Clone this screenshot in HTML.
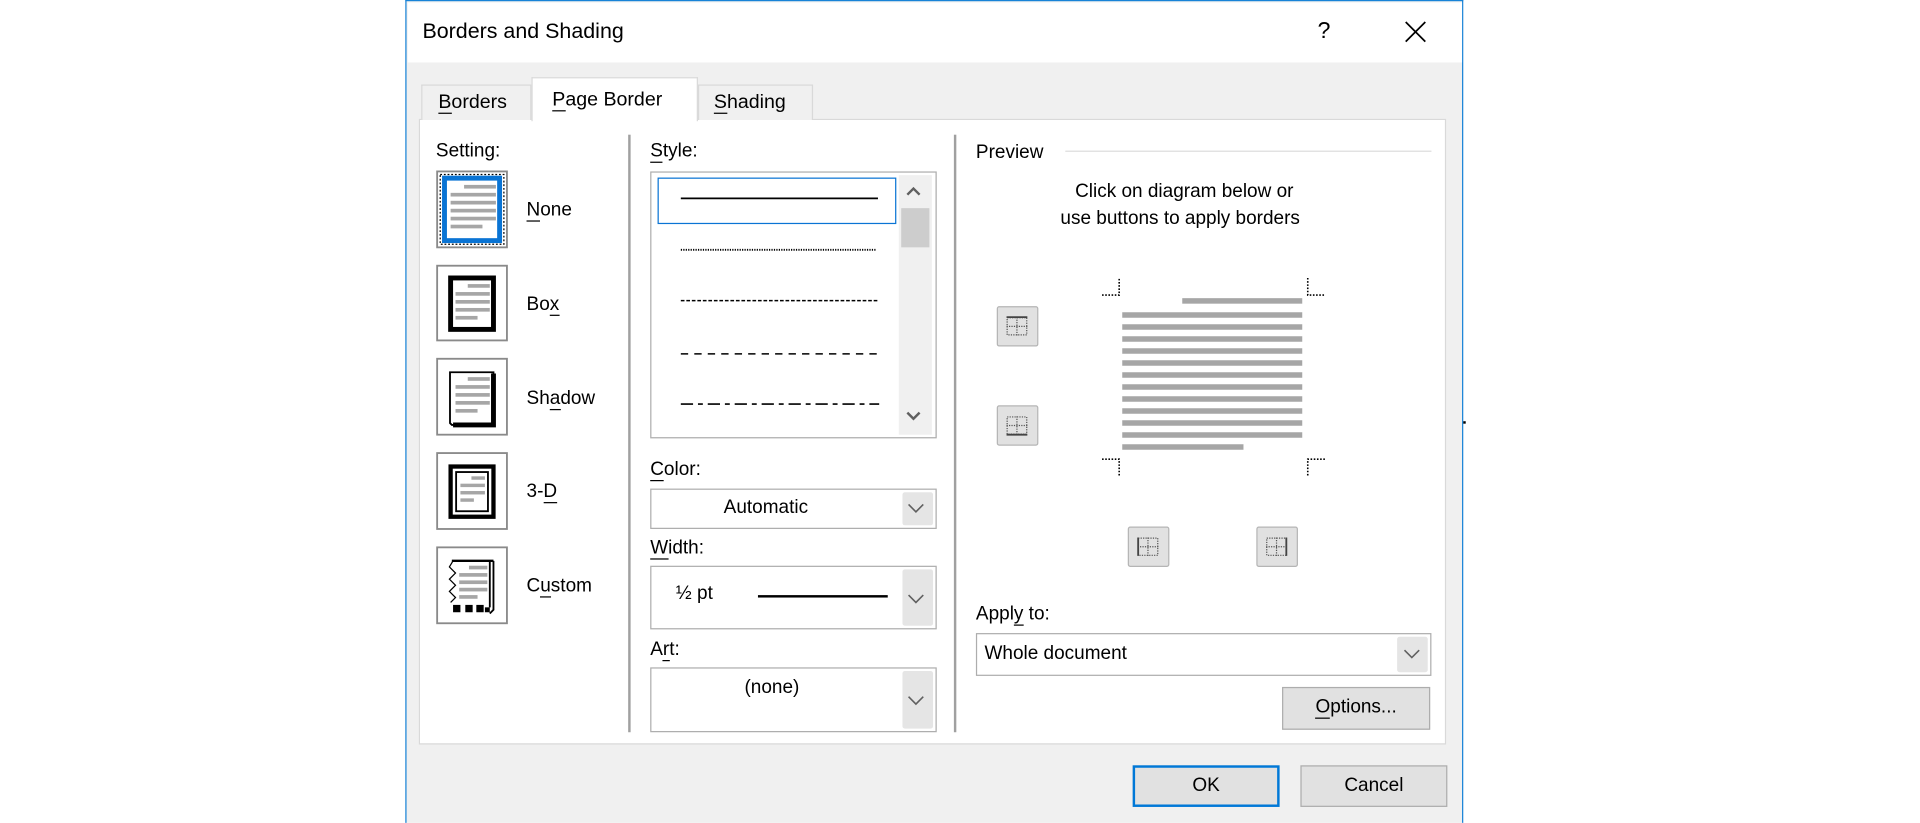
<!DOCTYPE html>
<html><head><meta charset="utf-8">
<style>
html,body{margin:0;padding:0;background:#fff;overflow:hidden;width:1920px;height:823px}
#w{position:absolute;left:0;top:0;width:1568px;height:672px;transform:scale(1.22449);transform-origin:0 0;font-family:"Liberation Sans",sans-serif;color:#000;font-size:15.5px}
.a{position:absolute}
.t{position:absolute;white-space:nowrap;line-height:1}
u{text-decoration:none;border-bottom:1.3px solid #000}
.combo{position:absolute;background:#fff;border:1.5px solid #adadad;box-sizing:border-box}
.dd{position:absolute;right:2px;top:2px;bottom:2px;width:25px;background:#e5e5e5;border-radius:2px}
.btn{position:absolute;background:#e1e1e1;border:1.5px solid #adadad;box-sizing:border-box;text-align:center}
.sb{position:absolute;background:#e1e1e1;border:1.5px solid #b5b5b5;box-sizing:border-box;border-radius:2px}
</style></head><body>
<div id="w">
<div class="a" style="left:331px;top:0;width:864px;height:672px;background:#f0f0f0;border:1.5px solid #1883d7;border-bottom:none;box-sizing:border-box"></div>
<div class="a" style="left:332.5px;top:1.5px;width:861px;height:49px;background:#fff"></div>
<div class="t" style="left:345px;top:17px;font-size:17.5px">Borders and Shading</div>
<div class="t" style="left:1076px;top:16px;font-size:19px">?</div>
<svg class="a" style="left:1147px;top:17px" width="18" height="18"><path d="M1 1L17 17M17 1L1 17" stroke="#000" stroke-width="1.4"/></svg>
<div class="a" style="left:1195px;top:344px;width:2px;height:2px;background:#000"></div>

<div class="a" style="left:342px;top:97px;width:839px;height:511px;background:#fff;border:1px solid #d9d9d9;box-sizing:border-box"></div>
<div class="a" style="left:344px;top:69px;width:90px;height:29px;background:#f0f0f0;border:1px solid #d9d9d9;border-bottom:none;box-sizing:border-box"></div>
<div class="a" style="left:570px;top:69px;width:94px;height:29px;background:#f0f0f0;border:1px solid #d9d9d9;border-bottom:none;box-sizing:border-box"></div>
<div class="a" style="left:434px;top:63px;width:136px;height:36px;background:#fff;border:1px solid #d9d9d9;border-bottom:none;box-sizing:border-box"></div>
<div class="t" style="left:358px;top:76px;font-size:16px"><u>B</u>orders</div>
<div class="t" style="left:451px;top:74px;font-size:16px"><u>P</u>age Border</div>
<div class="t" style="left:583px;top:76px;font-size:16px"><u>S</u>hading</div>

<div class="a" style="left:513px;top:110px;width:1.5px;height:488px;background:#a0a0a0"></div>
<div class="a" style="left:779px;top:110px;width:1.5px;height:488px;background:#a0a0a0"></div>

<div class="t" style="left:356px;top:116px">Setting:</div>
<svg class="a" style="left:356px;top:139px" width="59" height="64" viewBox="0 0 59 64">
<rect x="1" y="1" width="57" height="62" fill="#fff" stroke="#8a8a8a" stroke-width="1.5"/>
<rect x="3.5" y="3.5" width="52" height="57" fill="none" stroke="#000" stroke-width="1" stroke-dasharray="1.5 1.5"/>
<rect x="7" y="6.5" width="45" height="51" fill="#fff" stroke="#0a74d4" stroke-width="4"/>
<g fill="#a6a6a6"><rect x="23" y="12" width="26" height="3"/><rect x="12" y="18.5" width="37" height="3"/><rect x="12" y="25" width="37" height="3"/><rect x="12" y="31.5" width="37" height="3"/><rect x="12" y="38" width="37" height="3"/><rect x="12" y="44.5" width="26" height="3"/></g>
</svg>
<div class="t" style="left:430px;top:164px"><u>N</u>one</div>

<svg class="a" style="left:356px;top:216px" width="59" height="63" viewBox="0 0 59 63">
<rect x="1" y="1" width="57" height="61" fill="#fff" stroke="#8a8a8a" stroke-width="1.5"/>
<rect x="12" y="11" width="35" height="42" fill="#fff" stroke="#000" stroke-width="4"/>
<g fill="#a6a6a6"><rect x="26" y="16" width="18" height="3"/><rect x="16" y="22.5" width="28" height="3"/><rect x="16" y="29" width="28" height="3"/><rect x="16" y="35.5" width="28" height="3"/><rect x="16" y="42" width="18" height="3"/></g>
</svg>
<div class="t" style="left:430px;top:241px">Bo<u>x</u></div>

<svg class="a" style="left:356px;top:292px" width="59" height="64" viewBox="0 0 59 64">
<rect x="1" y="1" width="57" height="62" fill="#fff" stroke="#8a8a8a" stroke-width="1.5"/>
<path d="M11.5 12H47V55H13L11.5 53.5Z" fill="#fff" stroke="#000" stroke-width="1.5"/>
<path d="M47 13V55H14" fill="none" stroke="#000" stroke-width="4"/>
<g fill="#a6a6a6"><rect x="26" y="16" width="18" height="3"/><rect x="16" y="22.5" width="28" height="3"/><rect x="16" y="29" width="28" height="3"/><rect x="16" y="35.5" width="28" height="3"/><rect x="16" y="42" width="18" height="3"/></g>
</svg>
<div class="t" style="left:430px;top:318px">Sh<u>a</u>dow</div>

<svg class="a" style="left:356px;top:369px" width="59" height="64" viewBox="0 0 59 64">
<rect x="1" y="1" width="57" height="62" fill="#fff" stroke="#8a8a8a" stroke-width="1.5"/>
<rect x="12" y="12" width="35" height="41" fill="#fff" stroke="#000" stroke-width="3.5"/>
<rect x="16.5" y="16.5" width="26" height="32" fill="#fff" stroke="#000" stroke-width="1.5"/>
<g fill="#a6a6a6"><rect x="29" y="20" width="11" height="2.8"/><rect x="20" y="26" width="20" height="2.8"/><rect x="20" y="32" width="20" height="2.8"/><rect x="20" y="38" width="11" height="2.8"/></g>
</svg>
<div class="t" style="left:430px;top:394px">3-<u>D</u></div>

<svg class="a" style="left:356px;top:446px" width="59" height="64" viewBox="0 0 59 64">
<rect x="1" y="1" width="57" height="62" fill="#fff" stroke="#8a8a8a" stroke-width="1.5"/>
<path d="M13 12H47" stroke="#000" stroke-width="2"/>
<path d="M14 12L11 17L16 22L11 27L16 32L11 37L16 42L12 46" fill="none" stroke="#000" stroke-width="1"/>
<path d="M44 13V50M47 12V52L44 55" fill="none" stroke="#000" stroke-width="1.5"/>
<g fill="#000"><rect x="14" y="48" width="6" height="6"/><rect x="24" y="48" width="6" height="6"/><rect x="33" y="48" width="6" height="6"/><rect x="40" y="50" width="4" height="4"/></g>
<g fill="#a6a6a6"><rect x="27" y="16" width="15" height="3"/><rect x="19" y="22" width="23" height="3"/><rect x="19" y="28" width="23" height="3"/><rect x="19" y="34" width="23" height="3"/><rect x="19" y="40" width="15" height="3"/></g>
</svg>
<div class="t" style="left:430px;top:471px">C<u>u</u>stom</div>

<div class="t" style="left:531px;top:116px"><u>S</u>tyle:</div>
<div class="combo" style="left:531px;top:140px;width:234px;height:218px"></div>
<div class="a" style="left:537px;top:145px;width:195px;height:38px;border:1.5px solid #0a74d4;box-sizing:border-box"></div>
<div class="a" style="left:734px;top:143px;width:27px;height:212px;background:#f0f0f0"></div>
<div class="a" style="left:736px;top:170px;width:23px;height:32px;background:#cdcdcd"></div>
<svg class="a" style="left:738px;top:150px" width="16" height="12"><path d="M3 9L8 4L13 9" fill="none" stroke="#606060" stroke-width="2"/></svg>
<svg class="a" style="left:738px;top:334px" width="16" height="12"><path d="M3 3L8 8L13 3" fill="none" stroke="#606060" stroke-width="2"/></svg>
<svg class="a" style="left:550px;top:150px" width="180" height="200">
<path d="M6 12H167" stroke="#000" stroke-width="1.4"/>
<path d="M6 54H166" stroke="#000" stroke-width="1.5" stroke-dasharray="1 1"/>
<path d="M6 95.5H168" stroke="#000" stroke-width="1.3" stroke-dasharray="3 1.5"/>
<path d="M6 139H168" stroke="#000" stroke-width="1.3" stroke-dasharray="6 5"/>
<path d="M6 180H168" stroke="#000" stroke-width="1.3" stroke-dasharray="10 4 4 4"/>
</svg>

<div class="t" style="left:531px;top:376px"><u>C</u>olor:</div>
<div class="combo" style="left:531px;top:399px;width:234px;height:33px"><div class="dd"></div></div>
<div class="t" style="left:591px;top:407px">Automatic</div>
<svg class="a" style="left:740px;top:409px" width="16" height="12"><path d="M2 3L8 9L14 3" fill="none" stroke="#606060" stroke-width="1.3"/></svg>

<div class="t" style="left:531px;top:440px"><u>W</u>idth:</div>
<div class="combo" style="left:531px;top:462px;width:234px;height:52px"><div class="dd"></div></div>
<div class="t" style="left:552px;top:477px">½ pt</div>
<div class="a" style="left:619px;top:486px;width:106px;height:1.5px;background:#000"></div>
<svg class="a" style="left:740px;top:483px" width="16" height="12"><path d="M2 3L8 9L14 3" fill="none" stroke="#606060" stroke-width="1.3"/></svg>

<div class="t" style="left:531px;top:523px">A<u>r</u>t:</div>
<div class="combo" style="left:531px;top:545px;width:234px;height:53px"><div class="dd"></div></div>
<div class="t" style="left:608px;top:554px">(none)</div>
<svg class="a" style="left:740px;top:566px" width="16" height="12"><path d="M2 3L8 9L14 3" fill="none" stroke="#606060" stroke-width="1.3"/></svg>

<div class="t" style="left:797px;top:117px">Preview</div>
<div class="a" style="left:870px;top:123px;width:299px;height:1px;background:#dcdcdc"></div>
<div class="t" style="left:878px;top:149px">Click on diagram below or</div>
<div class="t" style="left:866px;top:171px">use buttons to apply borders</div>

<svg class="a" style="left:890px;top:220px" width="200" height="180">
<g stroke="#000" stroke-width="1.3" stroke-dasharray="1.3 1.3" fill="none">
<path d="M10 21H24V7"/><path d="M178 7V21H192"/>
<path d="M10 155H24V169"/><path d="M192 155H178V169"/>
</g>
<g fill="#a6a6a6">
<rect x="75.5" y="23.5" width="98" height="4.5"/>
<rect x="26.5" y="35" width="147" height="4.5"/>
<rect x="26.5" y="44.8" width="147" height="4.5"/>
<rect x="26.5" y="54.6" width="147" height="4.5"/>
<rect x="26.5" y="64.4" width="147" height="4.5"/>
<rect x="26.5" y="74.2" width="147" height="4.5"/>
<rect x="26.5" y="84" width="147" height="4.5"/>
<rect x="26.5" y="93.8" width="147" height="4.5"/>
<rect x="26.5" y="103.6" width="147" height="4.5"/>
<rect x="26.5" y="113.4" width="147" height="4.5"/>
<rect x="26.5" y="123.2" width="147" height="4.5"/>
<rect x="26.5" y="133" width="147" height="4.5"/>
<rect x="26.5" y="142.8" width="99" height="4.5"/>
</g>
</svg>

<div class="sb" style="left:814px;top:250px;width:34px;height:33px"></div>
<svg class="a" style="left:819px;top:256px" width="24" height="22"><g stroke="#555" stroke-width="1" stroke-dasharray="1 1" fill="none"><rect x="3.5" y="3.5" width="16" height="14"/><path d="M11.5 3V18M3 10.5H20"/></g><path d="M3 3H20" stroke="#444" stroke-width="1.5"/></svg>
<div class="sb" style="left:814px;top:331px;width:34px;height:33px"></div>
<svg class="a" style="left:819px;top:337px" width="24" height="22"><g stroke="#555" stroke-width="1" stroke-dasharray="1 1" fill="none"><rect x="3.5" y="3.5" width="16" height="14"/><path d="M11.5 3V18M3 10.5H20"/></g><path d="M3 18H20" stroke="#444" stroke-width="1.5"/></svg>
<div class="sb" style="left:921px;top:430px;width:34px;height:33px"></div>
<svg class="a" style="left:926px;top:436px" width="24" height="22"><g stroke="#555" stroke-width="1" stroke-dasharray="1 1" fill="none"><rect x="3.5" y="3.5" width="16" height="14"/><path d="M11.5 3V18M3 10.5H20"/></g><path d="M3.5 3V18" stroke="#444" stroke-width="1.5"/></svg>
<div class="sb" style="left:1026px;top:430px;width:34px;height:33px"></div>
<svg class="a" style="left:1031px;top:436px" width="24" height="22"><g stroke="#555" stroke-width="1" stroke-dasharray="1 1" fill="none"><rect x="3.5" y="3.5" width="16" height="14"/><path d="M11.5 3V18M3 10.5H20"/></g><path d="M19.5 3V18" stroke="#444" stroke-width="1.5"/></svg>

<div class="t" style="left:797px;top:494px">Appl<u>y</u> to:</div>
<div class="combo" style="left:797px;top:517px;width:372px;height:35px"><div class="dd"></div></div>
<div class="t" style="left:804px;top:526px">Whole document</div>
<svg class="a" style="left:1145px;top:528px" width="16" height="12"><path d="M2 3L8 9L14 3" fill="none" stroke="#606060" stroke-width="1.3"/></svg>

<div class="btn" style="left:1047px;top:561px;width:121px;height:35px;line-height:32px"><u>O</u>ptions...</div>

<div class="btn" style="left:925px;top:625px;width:120px;height:34px;line-height:30px;border:2px solid #0078d7">OK</div>
<div class="btn" style="left:1062px;top:625px;width:120px;height:34px;line-height:31px">Cancel</div>
</div>
</body></html>
